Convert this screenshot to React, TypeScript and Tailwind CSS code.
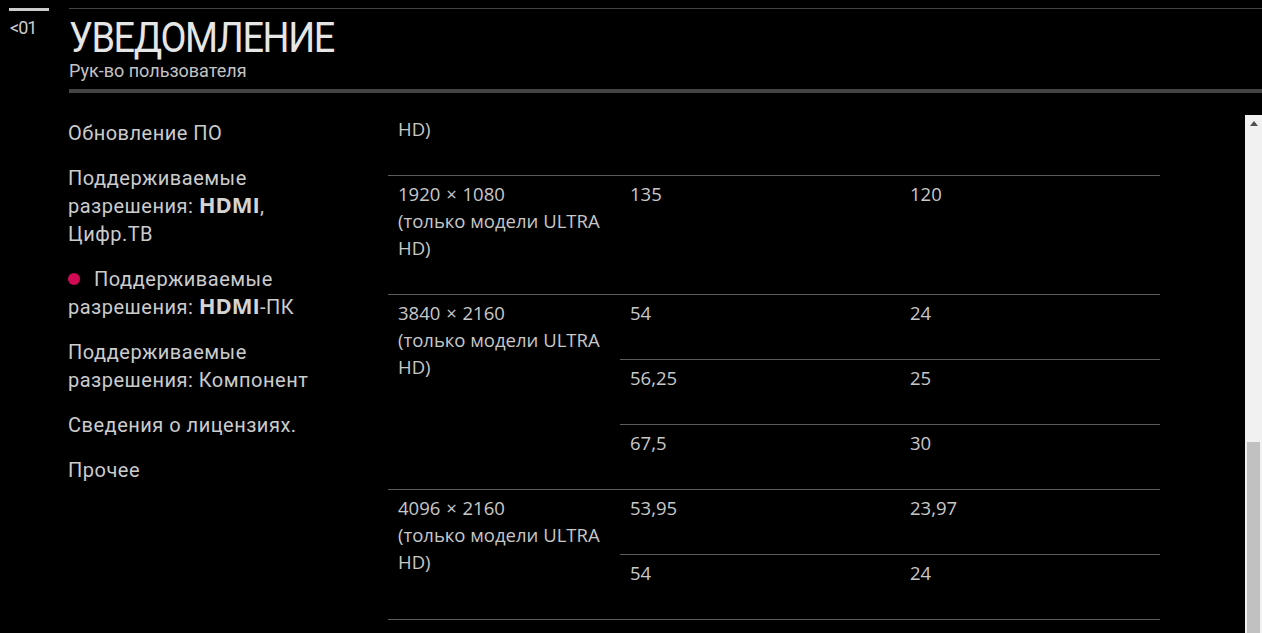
const navFont = { fontFamily: 'Roboto, "Noto Sans", sans-serif' }
const tableFont = { fontFamily: '"Open Sans", "Noto Sans", sans-serif' }

type Sub = { a: string; b: string }
type Group = { res: string; subs: Sub[] }

const groups: Group[] = [
  { res: '1920', subs: [{ a: '135', b: '120' }] },
  {
    res: '3840',
    subs: [
      { a: '54', b: '24' },
      { a: '56,25', b: '25' },
      { a: '67,5', b: '30' },
    ],
  },
  {
    res: '4096',
    subs: [
      { a: '53,95', b: '23,97' },
      { a: '54', b: '24' },
    ],
  },
]

const heights: Record<string, string> = { '1920': '1080', '3840': '2160', '4096': '2160' }

function NavItem({ children, active }: { children: React.ReactNode; active?: boolean }) {
  return (
    <li className="text-[20px] leading-[28px] tracking-[0.5px] text-[#cccccc]">
      {active ? (
        <span className="mr-[14px] inline-block h-3 w-3 rounded-full bg-[#d20a55] align-[1px]" />
      ) : null}
      {children}
    </li>
  )
}

function Hdmi({ children }: { children: React.ReactNode }) {
  return (
    <b className="text-[22px] leading-none font-bold tracking-normal text-[#d4d4d4]" style={tableFont}>
      {children}
    </b>
  )
}

function Cell({ children, className = '' }: { children: React.ReactNode; className?: string }) {
  return <div className={`px-[10px] pt-[4px] pb-[33px] ${className}`}>{children}</div>
}

function ResLabel({ res }: { res: string }) {
  return (
    <>
      {res} <span className="px-px">×</span> {heights[res]}
      <br />
      (только модели ULTRA
      <br />
      HD)
    </>
  )
}

export default function App() {
  return (
    <div className="flex h-[633px] w-[1262px] overflow-hidden bg-black text-[#cccccc]" style={navFont}>
      <aside className="w-[68px] shrink-0 pt-2 pl-[9px]">
        <div className="h-[3px] w-10 bg-[#cccccc]" />
        <div className="mt-[7px] pl-px text-[18px] leading-[20px] tracking-[-1px] text-[#cccccc]">&lt;01</div>
      </aside>

      <div className="flex min-w-0 flex-1 flex-col">
        <header className="pt-2 pl-px">
          <div className="h-px bg-[#444444]" />
          <h1 className="mt-[8px] origin-left scale-x-[0.9] text-[42px] leading-[42px] tracking-[-1.5px] text-[#e6e6e6]">
            УВЕДОМЛЕНИЕ
          </h1>
          <p className="mt-[2px] text-[18px] leading-[20px] text-[#c4c4c4]">Рук-во пользователя</p>
          <div className="mt-[8px] h-1 bg-[#444444]" />
        </header>

        <div className="flex min-h-0 flex-1">
          <nav className="w-[312px] shrink-0 pt-[26px]">
            <ul className="flex flex-col gap-[17px]">
              <NavItem>Обновление ПО</NavItem>
              <NavItem>
                Поддерживаемые
                <br />
                разрешения: <Hdmi>HDMI</Hdmi>,
                <br />
                Цифр.ТВ
              </NavItem>
              <NavItem active>
                Поддерживаемые
                <br />
                разрешения: <Hdmi>HDMI</Hdmi>-ПК
              </NavItem>
              <NavItem>
                Поддерживаемые
                <br />
                разрешения: Компонент
              </NavItem>
              <NavItem>Сведения о лицензиях.</NavItem>
              <NavItem>Прочее</NavItem>
            </ul>
          </nav>

          <div className="mt-[22px] flex min-w-0 flex-1">
            <div className="min-w-0 flex-1 overflow-hidden pl-2">
              <div className="w-[772px] text-[18.5px] leading-[27px] text-[#c8c8c8]" style={tableFont}>
                <div className="border-b border-[#5c5c5c] px-[10px] pb-[33px]">HD)</div>
                {groups.map((g) => (
                  <div key={g.res} className="flex border-b border-[#5c5c5c]">
                    <Cell className="w-[232px] shrink-0">
                      <ResLabel res={g.res} />
                    </Cell>
                    <div className="flex flex-1 flex-col">
                      {g.subs.map((s, i) => (
                        <div
                          key={s.a + i}
                          className={`flex ${i < g.subs.length - 1 ? 'border-b border-[#5c5c5c]' : ''}`}
                        >
                          <Cell className="w-[280px] shrink-0">{s.a}</Cell>
                          <Cell className="flex-1">{s.b}</Cell>
                        </div>
                      ))}
                    </div>
                  </div>
                ))}
              </div>
            </div>

            <div className="flex w-[17px] shrink-0 flex-col bg-[#f1f1f1]">
              <div className="flex h-[17px] items-center justify-center">
                <svg width="8" height="5" viewBox="0 0 8 5">
                  <path d="M4 0 L8 5 L0 5 Z" fill="#505050" />
                </svg>
              </div>
              <div className="flex-1" />
              <div className="mx-[2px] h-[191px] shrink-0 bg-[#c1c1c1]" />
            </div>
          </div>
        </div>
      </div>
    </div>
  )
}
